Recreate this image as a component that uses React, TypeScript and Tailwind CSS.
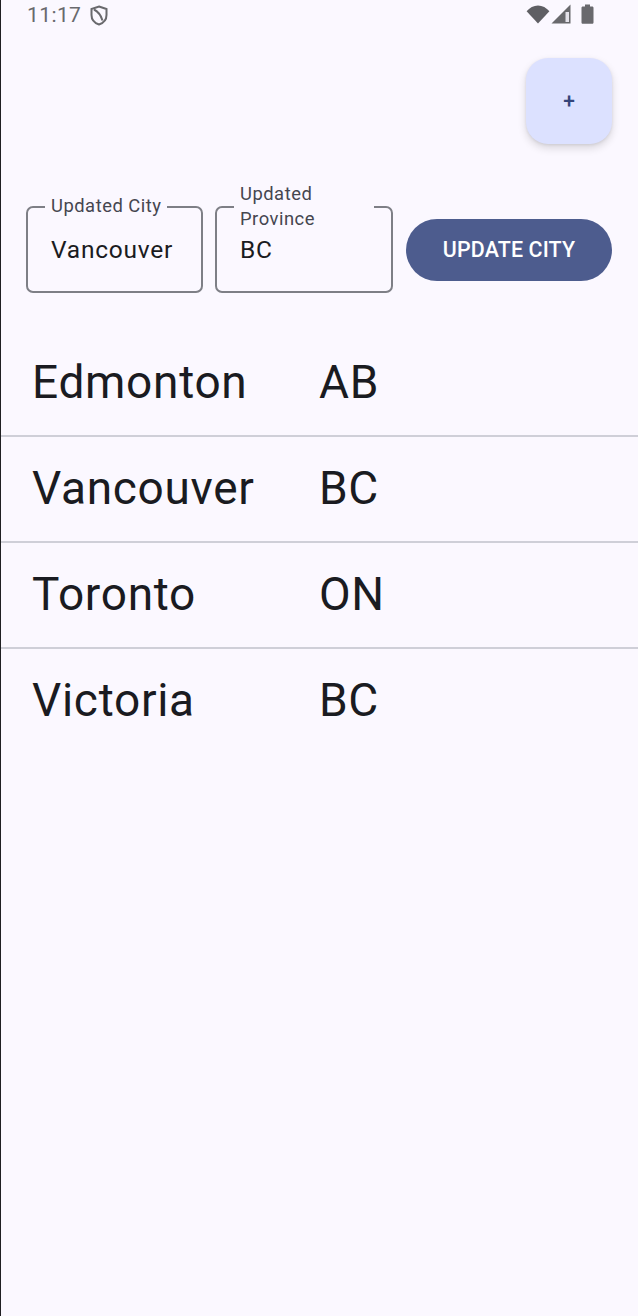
const font = { fontFamily: 'Roboto, sans-serif' };

function Wifi() {
  return (
    <svg width="24" height="20" viewBox="0 0 24 20" className="block">
      <path d="M12 19.500 0.600 7.200C3.600 3.900 7.600 1.500 12 1.500s8.400 2.400 11.400 5.700L12 19.500Z" fill="#5f5f64" />
    </svg>
  );
}

function Signal() {
  return (
    <svg width="20" height="20" viewBox="0 0 20 20" className="block">
      <path d="M0.500 19.500 19.500 0.500V19.500H0.500Z" fill="#69696d" />
      <path d="M14.500 8h3.500v10h-3.500z" fill="#e4e2ea" />
    </svg>
  );
}

function Battery() {
  return (
    <svg width="13" height="20" viewBox="0 0 13 20" className="block">
      <path d="M4 0.500h5V2.500h2.200c.7 0 1.300.6 1.300 1.300v14.600c0 .7-.6 1.300-1.300 1.300H1.800c-.7 0-1.300-.6-1.300-1.300V3.800c0-.7.6-1.300 1.300-1.300H4V.5Z" fill="#69696d" />
    </svg>
  );
}

function Shield() {
  return (
    <svg width="18" height="21" viewBox="0 0 18 21" fill="none" stroke="#69696d" strokeWidth="2" className="mt-[1px] block">
      <path d="M9 1.500 16.500 4v6c0 4.500-3 8-7.500 9.500C4.500 18 1.500 14.500 1.500 10V4L9 1.500Z" />
      <path d="M4 4.500c4 2 7 6 8.500 11" />
    </svg>
  );
}

function Field({ label, value, width, gapWidth, twoLine }: { label: string; value: string; width: string; gapWidth: string; twoLine?: boolean }) {
  return (
    <div className={`relative h-[87px] rounded-[7px] border-2 border-[#7e7f86] ${width}`}>
      <div className={`absolute left-[17px] top-[-3px] h-[6px] bg-[#fbf8ff] ${gapWidth}`} />
      <div className={`absolute left-[23px] text-[18.4px] leading-[25px] tracking-[0.5px] text-[#45464f] ${twoLine ? 'top-[-27px] w-[110px]' : 'top-[-15px] whitespace-nowrap'}`}>
        {label}
      </div>
      <div className="absolute left-[23px] top-[26px] text-[24.5px] leading-[32px] tracking-[0.75px] text-[#1a1b21]">{value}</div>
    </div>
  );
}

function Row({ city, province, last }: { city: string; province: string; last?: boolean }) {
  return (
    <div className={`flex h-[106px] items-start pl-[31px] pt-[19px] text-[46px] leading-[64px] tracking-[0.7px] text-[#1a1b21] ${last ? '' : 'border-b-2 border-[#cfcfd8]'}`}>
      <div className="w-[287px]">{city}</div>
      <div>{province}</div>
    </div>
  );
}

export default function App() {
  return (
    <div className="h-[1316px] w-[638px] overflow-hidden border-l border-l-[#1f1f22] bg-[#fbf8ff]" style={font}>
      <div className="flex h-[28px] items-center justify-between pl-[26px] pr-[44px]">
        <div className="flex items-center gap-[9px] pt-[1px] text-[21px] leading-[28px] tracking-[0.4px] text-[#69696d]">
          <span>11:17</span>
          <Shield />
        </div>
        <div className="flex items-center gap-[1px]">
          <Wifi />
          <Signal />
          <div className="ml-[9px]"><Battery /></div>
        </div>
      </div>

      <div className="flex justify-end pr-[26px] pt-[30px]">
        <div className="flex h-[86px] w-[86px] items-center justify-center rounded-[22px] bg-[#dce1ff] pt-[2px] text-[21px] font-medium text-[#34447a] shadow-[0_4px_8px_rgba(0,0,0,0.14),0_1px_3px_rgba(0,0,0,0.08)]">
          +
        </div>
      </div>

      <div className="flex items-center pl-[25px] pt-[62px]">
        <Field label="Updated City" value="Vancouver" width="w-[177px]" gapWidth="w-[122px]" />
        <div className="ml-[12px]">
          <Field label="Updated Province" value="BC" width="w-[178px]" gapWidth="w-[140px]" twoLine />
        </div>
        <div className="ml-[13px] mt-[1px] flex h-[62px] w-[206px] items-center justify-center rounded-full bg-[#4d5c8e] pt-[1px] text-[21.4px] font-medium tracking-[0.15px] text-white">
          UPDATE CITY
        </div>
      </div>

      <div className="pt-[38px]">
        <Row city="Edmonton" province="AB" />
        <Row city="Vancouver" province="BC" />
        <Row city="Toronto" province="ON" />
        <Row city="Victoria" province="BC" last />
      </div>
    </div>
  );
}
